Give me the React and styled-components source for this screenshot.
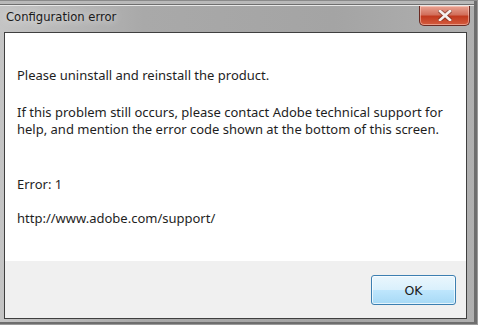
import React from "react";
import styled, { createGlobalStyle } from "styled-components";

const Global = createGlobalStyle`
  html, body {
    margin: 0;
    padding: 0;
    width: 478px;
    height: 325px;
    overflow: hidden;
  }
`;

const Window = styled.div`
  box-sizing: border-box;
  width: 478px;
  height: 325px;
  display: flex;
  flex-direction: column;
  background: linear-gradient(90deg, #c4c4c4 0%, #a9a9a9 30%, #a4a4a4 70%, #b0b0b0 100%);
  border-top: 1px solid #8a8a8a;
  border-right: 1px solid #9a9a9a;
  border-bottom: 1px solid #9a9a9a;
  box-shadow: inset -3px -2px 0 #6e6e6e, inset 0 3px 0 #b9b9b9, inset 0 4px 0 #6f6f6f,
    inset 0 5px 0 #e8e8e8;
  font-family: "DejaVu Sans", Tahoma, sans-serif;
`;

const TitleBar = styled.div`
  height: 31px;
  display: flex;
  justify-content: space-between;
  align-items: flex-start;
`;

const Title = styled.div`
  margin: 9px 0 0 6px;
  font-size: 11.6px;
  color: #1a1a1a;
  text-shadow: 0 0 8px rgba(255, 255, 255, 0.9);
`;

const CloseButton = styled.div`
  box-sizing: border-box;
  width: 51px;
  height: 20px;
  margin: 5px 7px 0 0;
  border: 1px solid #6b2a22;
  border-top: none;
  border-radius: 0 0 5px 5px;
  background: linear-gradient(180deg, #e9a393 0%, #d2705c 45%, #c23a1f 55%, #d45c3e 100%);
  box-shadow: inset 0 0 0 1px rgba(255, 220, 210, 0.5);
  display: flex;
  align-items: center;
  justify-content: center;
`;

const Client = styled.div`
  flex: 1;
  margin: 0 10px 5px 4px;
  border: 1px solid #3f3f3f;
  display: flex;
  flex-direction: column;
`;

const Content = styled.div`
  flex: 1;
  background: #ffffff;
  padding: 34px 12px 0 12px;
  font-family: "Noto Sans", sans-serif;
  font-size: 13px;
  color: #1e1e1e;
  line-height: 17px;
  white-space: nowrap;
`;

const Para = styled.p`
  margin: 0 0 ${(p) => p.$gap}px 0;
`;

const Footer = styled.div`
  height: 57px;
  background: #f0f0f0;
  display: flex;
  justify-content: flex-end;
  align-items: flex-start;
  padding-right: 10px;
`;

const OkButton = styled.button`
  box-sizing: border-box;
  width: 85px;
  height: 30px;
  margin-top: 14px;
  border: 1px solid #3c7fb1;
  border-radius: 3px;
  background: linear-gradient(180deg, #eaf6fd 0%, #d9f0fc 50%, #bee6fd 51%, #a7d9f5 100%);
  box-shadow: inset 0 0 0 1px rgba(255, 255, 255, 0.7);
  font-family: "DejaVu Sans", Tahoma, sans-serif;
  font-size: 12.5px;
  color: #1a1a1a;
  padding: 0;
`;

function CloseGlyph() {
  return (
    <svg width="14" height="11" viewBox="0 0 14 11">
      <path
        d="M2 1 L12 10 M12 1 L2 10"
        stroke="#5a2418"
        strokeOpacity="0.5"
        strokeWidth="4.5"
        strokeLinecap="square"
        fill="none"
      />
      <path
        d="M2 1 L12 10 M12 1 L2 10"
        stroke="#f4f0ee"
        strokeWidth="2.6"
        strokeLinecap="square"
        fill="none"
      />
    </svg>
  );
}

export default function App() {
  return (
    <>
      <Global />
      <Window>
        <TitleBar>
          <Title>Configuration error</Title>
          <CloseButton>
            <CloseGlyph />
          </CloseButton>
        </TitleBar>
        <Client>
          <Content>
            <Para $gap={20}>Please uninstall and reinstall the product.</Para>
            <Para $gap={38}>
              If this problem still occurs, please contact Adobe technical support for
              <br />
              help, and mention the error code shown at the bottom of this screen.
            </Para>
            <Para $gap={17}>Error: 1</Para>
            <Para $gap={0}>http://www.adobe.com/support/</Para>
          </Content>
          <Footer>
            <OkButton>OK</OkButton>
          </Footer>
        </Client>
      </Window>
    </>
  );
}
